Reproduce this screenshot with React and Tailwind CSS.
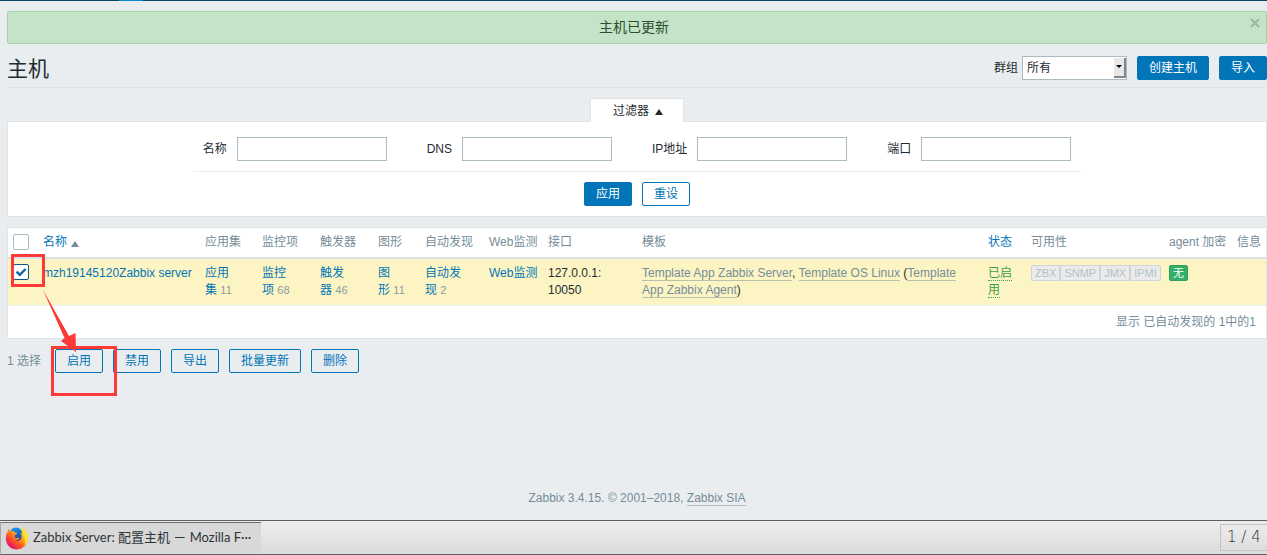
import { useState } from "react";

const BUTTON = "h-6 shrink-0 cursor-pointer rounded-[2px] border border-[#0275b8] px-[11px] text-xs leading-[22px]";
const SOLID = "bg-[#0275b8] text-white";
const OUTLINE = "bg-transparent text-[#0275b8]";

function Button({ solid, children }) {
  return (
    <button type="button" className={`${BUTTON} ${solid ? SOLID : OUTLINE}`}>
      {children}
    </button>
  );
}

function Checkbox({ label, checked, onChange }) {
  return (
    <span className="relative block size-4">
      <input
        type="checkbox"
        aria-label={label}
        checked={checked}
        onChange={onChange}
        className="block size-4 appearance-none rounded-[2px] border border-[#acbbc2] bg-white checked:border-[#0f5a8a]"
      />
      {checked && (
        <svg viewBox="0 0 16 16" className="pointer-events-none absolute inset-0 size-4" fill="none" stroke="#0a6aa8" strokeWidth="2.4">
          <path d="M3.6 7.6 L6.8 10.8 L12.6 5" />
        </svg>
      )}
    </span>
  );
}

function FilterField({ id, label }) {
  return (
    <div className="flex items-center gap-2.5">
      <label htmlFor={id}>{label}</label>
      <input id={id} type="text" className="h-6 w-[150px] border border-[#acbbc2] bg-white px-1" />
    </div>
  );
}

function CountLink({ text, count }) {
  return (
    <>
      <a href="#list" className="text-[#0275b8]">{text}</a>
      {"\u00a0"}
      <span className="text-[11px] text-[#8c9ba3]">{count}</span>
    </>
  );
}

function TemplateLink({ children }) {
  return (
    <a href="#template" className="border-b border-[#768d99]/50 text-[#768d99]">
      {children}
    </a>
  );
}

function FirefoxIcon() {
  return (
    <svg viewBox="0 0 24 24" className="size-6 shrink-0">
      <defs>
        <linearGradient id="fxBody" x1="0.85" y1="0.1" x2="0.2" y2="0.9">
          <stop offset="0" stopColor="#ffe92e" />
          <stop offset="0.35" stopColor="#ffb01c" />
          <stop offset="0.65" stopColor="#ff5a1f" />
          <stop offset="1" stopColor="#e3126b" />
        </linearGradient>
        <linearGradient id="fxGlobe" x1="0.3" y1="0" x2="0.6" y2="1">
          <stop offset="0" stopColor="#1d9af0" />
          <stop offset="0.55" stopColor="#1a62c4" />
          <stop offset="1" stopColor="#20408f" />
        </linearGradient>
      </defs>
      <circle cx="11" cy="8.6" r="7" fill="url(#fxGlobe)" />
      <path fill="url(#fxBody)" d="M3.8 2.8 C4.2 4 5 4.9 6.2 5.2 C7.6 4.8 8.8 5.2 9.8 6.4 L12 6.8 C12.2 8 10.6 8.6 9.8 9.4 C9.6 10.6 9.6 11.2 10.4 11.8 C12 12.4 13.2 11.4 14.6 12.2 C14 13.8 12.2 14.2 10.8 14.6 C13.4 15.8 16.4 14.4 16.6 11.2 C16.8 8.8 15.8 7.4 15 6.4 C16.8 6.8 17.4 7.6 17.8 8.2 C16.6 5.2 16.2 2.8 17.4 .8 C18.6 3.6 22.6 6.2 23 11.6 C23.4 18.4 18.4 23.4 12 23.4 C5.6 23.4 .8 18.6 .8 12.4 C.8 9 1.8 7 2.6 6 C2.6 4.6 3.2 3.4 3.8 2.8 Z" />
      <path fill="#ffe02e" d="M17.4 .8 C18.6 3.6 22.6 6.2 23 11.6 C23.2 15 21.8 17.8 19.6 19.6 C20.6 16 20 12.4 18.8 9.8 C17.4 6.4 16 3.6 17.4 .8 Z" />
    </svg>
  );
}

function Annotations() {
  return (
    <svg width="130" height="400" className="pointer-events-none absolute top-0 left-0" fill="none" stroke="#fd3a38" strokeWidth="3">
      <rect x="12.5" y="255.5" width="31" height="30" />
      <rect x="52.5" y="347.5" width="63" height="47" />
      <path d="M43 290 L69 336 L75.5 333 L76 352 L61 341 L64.5 338 Z" fill="#fd3a38" stroke="none" />
    </svg>
  );
}

const FILTERS = [
  ["name", "名称"],
  ["dns", "DNS"],
  ["ip", "IP地址"],
  ["port", "端口"],
];

export default function App() {
  const [all, setAll] = useState(false);
  const [selected, setSelected] = useState(true);

  return (
    <div className="relative flex min-h-screen flex-col bg-[#e9edf0] font-['Liberation_Sans','Noto_Sans_CJK_SC',sans-serif] text-xs text-[#1f2c33]">
      <header className="h-px bg-[#0a466a]">
        <div className="ml-[119px] h-px w-6 bg-[#0a87d0]" />
      </header>

      <main className="pl-[7px]">
        <div role="status" className="relative mt-2.5 flex h-[33px] items-center justify-center rounded-[2px] border border-[#a3d4a6] bg-[#c5e3c7] pr-1.5 pb-0.5 text-sm text-[#2a4e2c]">
          主机已更新
          <button type="button" aria-label="关闭" className="absolute top-1.5 right-1.5 size-2.5 text-[#9db8ab]">
            <svg viewBox="0 0 10 10" className="size-2.5" stroke="currentColor" strokeWidth="2.2">
              <path d="M1 1 L9 9 M9 1 L1 9" />
            </svg>
          </button>
        </div>

        <div className="flex h-11 items-center justify-between border-b border-[#dfe4e7] pt-1">
          <h1 className="pt-0.5 text-[21px] leading-6">主机</h1>
          <div className="flex items-center gap-2.5">
            <div className="flex items-center gap-1">
              <label htmlFor="group">群组</label>
              <div className="relative">
                <select id="group" className="block h-6 w-[105px] appearance-none border border-[#acbbc2] bg-white pl-1 leading-[22px]">
                  <option>所有</option>
                </select>
                <span className="pointer-events-none absolute top-0.5 right-px flex h-5 w-3 items-center justify-center border-r-2 border-b-2 border-[#858585] bg-[#e8e8e6]">
                  <svg viewBox="0 0 6 3" className="h-[3px] w-1.5">
                    <path d="M0 0 H6 L3 3 Z" fill="#000" />
                  </svg>
                </span>
              </div>
            </div>
            <Button solid>创建主机</Button>
            <Button solid>导入</Button>
          </div>
        </div>

        <section className="mt-2.5">
          <div className="flex justify-center">
            <button type="button" className="relative -mb-px flex h-6 w-[94px] items-center justify-center gap-1.5 rounded-t-[2px] border border-b-0 border-[#dfe4e7] bg-white pl-0.5">
              过滤器
              <svg viewBox="0 0 8 6" className="mt-0.5 h-1.5 w-2">
                <path d="M4 0 L8 6 H0 Z" fill="#1f2c33" />
              </svg>
            </button>
          </div>
          <form className="flex flex-col items-center border border-[#dfe4e7] bg-white pt-[15px] pb-2.5" onSubmit={(e) => e.preventDefault()}>
            <div className="flex gap-10 border-b border-[#ebeef0] px-2.5 pb-2.5">
              {FILTERS.map(([id, label]) => (
                <FilterField key={id} id={id} label={label} />
              ))}
            </div>
            <div className="flex gap-2.5 pt-2.5">
              <Button solid>应用</Button>
              <Button>重设</Button>
            </div>
          </form>
        </section>

        <div className="mt-2.5 border border-[#dfe4e7] bg-white">
          <table className="w-full table-fixed border-collapse text-left leading-[17px] [&_td]:px-[5px] [&_td]:align-top [&_th]:px-[5px] [&_th]:font-normal [&_th]:whitespace-nowrap">
            <colgroup>
              <col className="w-[30px]" />
              <col className="w-[162px]" />
              <col className="w-[57px]" />
              <col className="w-[58px]" />
              <col className="w-[58px]" />
              <col className="w-[47px]" />
              <col className="w-[64px]" />
              <col className="w-[59px]" />
              <col className="w-[94px]" />
              <col />
              <col className="w-[43px]" />
              <col className="w-[138px]" />
              <col className="w-[68px]" />
              <col className="w-[34px]" />
            </colgroup>
            <thead>
              <tr className="h-[30px] border-b-2 border-[#dce2e5] text-[#768d99]">
                <th className="pb-0.5"><Checkbox label="全选" checked={all} onChange={() => setAll(!all)} /></th>
                <th>
                  <a href="#sort" className="flex items-center gap-1 text-[#0275b8]">
                    名称
                    <svg viewBox="0 0 8 6" className="mt-0.5 h-1.5 w-2">
                      <path d="M4 0 L8 6 H0 Z" fill="#768d99" />
                    </svg>
                  </a>
                </th>
                <th>应用集</th>
                <th>监控项</th>
                <th>触发器</th>
                <th>图形</th>
                <th>自动发现</th>
                <th>Web监测</th>
                <th>接口</th>
                <th>模板</th>
                <th><a href="#status" className="text-[#0275b8]">状态</a></th>
                <th>可用性</th>
                <th>agent 加密</th>
                <th>信息</th>
              </tr>
            </thead>
            <tbody>
              <tr className="border-b border-[#ebeef0] bg-[#fcf5c3] [&_td]:py-1.5 [&_td:first-child]:pt-[5px]">
                <td><Checkbox label="mzh19145120Zabbix server" checked={selected} onChange={() => setSelected(!selected)} /></td>
                <td className="whitespace-nowrap"><a href="#host" className="text-[#0275b8]">mzh19145120Zabbix server</a></td>
                <td><CountLink text="应用集" count="11" /></td>
                <td><CountLink text="监控项" count="68" /></td>
                <td><CountLink text="触发器" count="46" /></td>
                <td><CountLink text="图形" count="11" /></td>
                <td><CountLink text="自动发现" count="2" /></td>
                <td className="whitespace-nowrap"><a href="#web" className="text-[#0275b8]">Web监测</a></td>
                <td>127.0.0.1:<br />10050</td>
                <td>
                  <div className="max-w-[336px]">
                    <TemplateLink>Template App Zabbix Server</TemplateLink>,{" "}
                    <TemplateLink>Template OS Linux</TemplateLink>{" "}
                    (<TemplateLink>Template App Zabbix Agent</TemplateLink>)
                  </div>
                </td>
                <td><a href="#disable" className="border-b border-dotted border-[#429e47] text-[#429e47]">已启用</a></td>
                <td>
                  <div className="flex text-[11px] leading-[14px] text-[#b4c0c8]">
                    {["ZBX", "SNMP", "JMX", "IPMI"].map((name) => (
                      <span key={name} className="border border-[#ccd5d9] bg-[#ebebeb] px-[3px] first:rounded-l-[2px] last:rounded-r-[2px]">{name}</span>
                    ))}
                  </div>
                </td>
                <td>
                  <span className="block w-fit rounded-[2px] border border-[#2f9f5e] bg-[#34af67] px-[3px] text-[11px] leading-[14px] text-white">无</span>
                </td>
                <td />
              </tr>
            </tbody>
          </table>
          <div className="px-2.5 text-right leading-8 text-[#768d99]">显示 已自动发现的 1中的1</div>
        </div>

        <div className="mt-2.5 flex items-center gap-2.5">
          <span className="w-[38px] whitespace-nowrap text-[#768d99]">1 选择</span>
          <Button>启用</Button>
          <Button>禁用</Button>
          <Button>导出</Button>
          <Button>批量更新</Button>
          <Button>删除</Button>
        </div>
      </main>

      <footer className="mt-auto pt-4 pb-[14px] pl-[7px] text-center leading-4 text-[#768d99]">
        Zabbix 3.4.15. © 2001–2018, <a href="#zabbix" className="border-b border-[#768d99]/50">Zabbix SIA</a>
      </footer>

      <nav className="flex h-[35px] items-stretch justify-between border-y border-[#5f5f5f] bg-linear-to-b from-[#ededed] to-[#dcdcdc] text-[13px] text-[#2e3436]">
        <button type="button" className="mt-px mb-px flex w-[261px] items-center gap-1 border-t border-l border-t-[#707070] border-l-[#a8a8a8] bg-[#d8d8d8] pl-1 font-['Lato','Noto_Sans_CJK_SC',sans-serif] whitespace-nowrap">
          <FirefoxIcon />
          <span>Zabbix Server: 配置主机 － Mozilla F···</span>
        </button>
        <div className="mt-[3px] mb-[3px] flex w-[47px] items-center border border-r-0 border-[#c4c4c4] pl-1.5 font-['DejaVu_Sans',sans-serif] text-[15px] font-extralight whitespace-pre">
          1 / 4
        </div>
      </nav>

      <Annotations />
    </div>
  );
}
